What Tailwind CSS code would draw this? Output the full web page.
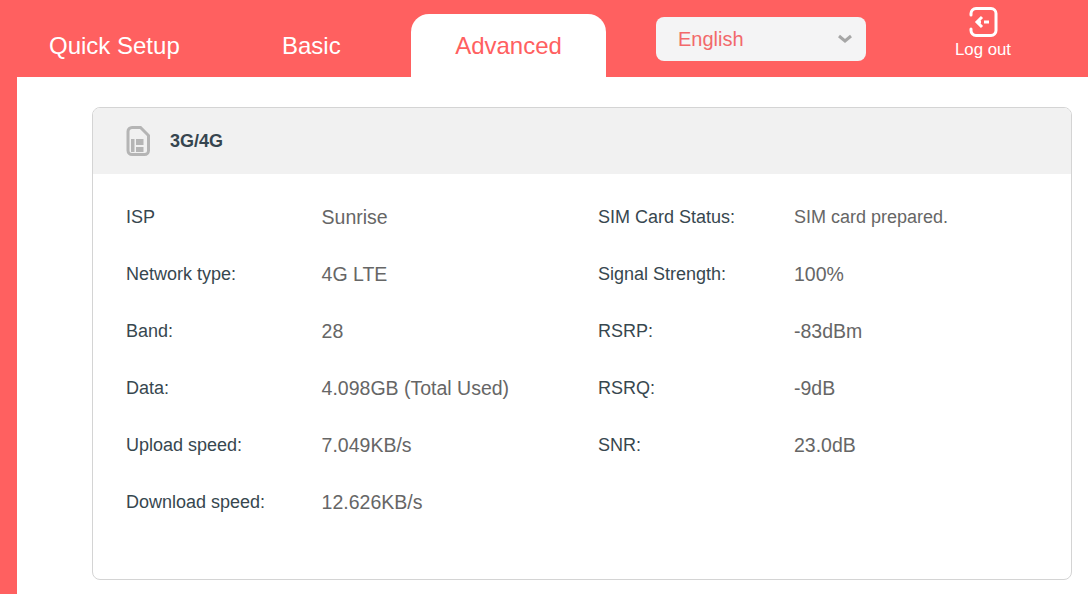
<!DOCTYPE html>
<html><head><meta charset="utf-8"><script src="https://cdn.jsdelivr.net/npm/@tailwindcss/browser@4"></script></head>
<body class="m-0 overflow-hidden">
<div class="w-[1088px] h-[594px] bg-[#ff6060] font-['Liberation_Sans',Arial,sans-serif] flex flex-col overflow-hidden">
  <header class="h-[77px] shrink-0 flex text-white relative">
    <div class="w-[411px] flex shrink-0 pt-[14px]">
      <div class="pl-[49px] w-[282px] h-[63px] flex items-center text-[24px] shrink-0">Quick Setup</div>
      <div class="h-[63px] flex items-center text-[24px]">Basic</div>
    </div>
    <div class="mt-[14px] w-[195px] h-[63px] shrink-0 bg-white rounded-t-[18px] flex items-center justify-center text-[24px] text-[#ff6060]">Advanced</div>
    <div class="ml-[50px] mt-[17px] w-[210px] h-[44px] shrink-0 bg-[#f4f4f5] rounded-[8px] pl-[22px] pr-[13px] flex items-center justify-between text-[20px] text-[#f2696b]">
      <span>English</span>
      <svg width="16" height="10" viewBox="0 0 16 10" fill="none"><path d="M2 2l6 5 6-5" stroke="#a6a6a6" stroke-width="3"/></svg>
    </div>
    <div class="ml-[89px] w-[56px] flex flex-col items-center pt-[7px] shrink-0">
      <svg width="29" height="30" viewBox="0 0 29 30" fill="none"><path d="M2 8V6.500a5 5 0 0 1 5-5h15a5 5 0 0 1 5 5v17a5 5 0 0 1-5 5H7a5 5 0 0 1-5-5V22" stroke="#fff" stroke-width="3" stroke-linecap="round"/><path d="M13 10l-5 5 5 5" stroke="#fff" stroke-width="3"/><path d="M9 15h3M15 15h5" stroke="#fff" stroke-width="3"/></svg>
      <span class="text-[16.8px] leading-[18px] mt-[4px] whitespace-nowrap">Log out</span>
    </div>
  </header>
  <main class="ml-[17px] flex-1 bg-white pl-[75px] pr-[16px] pt-[30px]">
    <section class="h-[473px] border border-[#d4d4d4] rounded-[8px] overflow-hidden">
      <div class="h-[66px] bg-[#f1f1f1] flex items-center pl-[33px]">
        <svg width="24" height="30" viewBox="0 0 24 30" fill="none"><path d="M6 1.500h8.500L22.500 9.500V24.500a4 4 0 0 1-4 4H6a4 4 0 0 1-4-4V5.500a4 4 0 0 1 4-4z" stroke="#b5b5b5" stroke-width="3"/><path d="M5 13h3.500v13H5zM10 13h7.500v6H10zM10 21h7.500v5H10z" fill="#b5b5b5"/></svg>
        <span class="ml-[20px] text-[18px] font-bold text-[#36454f]">3G/4G</span>
      </div>
      <div class="pl-[33px] pt-[15px] grid grid-cols-[195.6px_276.4px_196px_1fr] auto-rows-[57px] items-center text-[18px] text-[#37474f]">
        <div>ISP</div><div class="text-[19.5px] text-[#666]">Sunrise</div><div>SIM Card Status:</div><div class="text-[#666]">SIM card prepared.</div>
        <div>Network type:</div><div class="text-[19.5px] text-[#666]">4G LTE</div><div>Signal Strength:</div><div class="text-[19.5px] text-[#666]">100%</div>
        <div>Band:</div><div class="text-[19.5px] text-[#666]">28</div><div>RSRP:</div><div class="text-[19.5px] text-[#666]">-83dBm</div>
        <div>Data:</div><div class="text-[19.5px] text-[#666]">4.098GB (Total Used)</div><div>RSRQ:</div><div class="text-[19.5px] text-[#666]">-9dB</div>
        <div>Upload speed:</div><div class="text-[19.5px] text-[#666]">7.049KB/s</div><div>SNR:</div><div class="text-[19.5px] text-[#666]">23.0dB</div>
        <div>Download speed:</div><div class="text-[19.5px] text-[#666]">12.626KB/s</div>
      </div>
    </section>
  </main>
</div>
</body></html>
